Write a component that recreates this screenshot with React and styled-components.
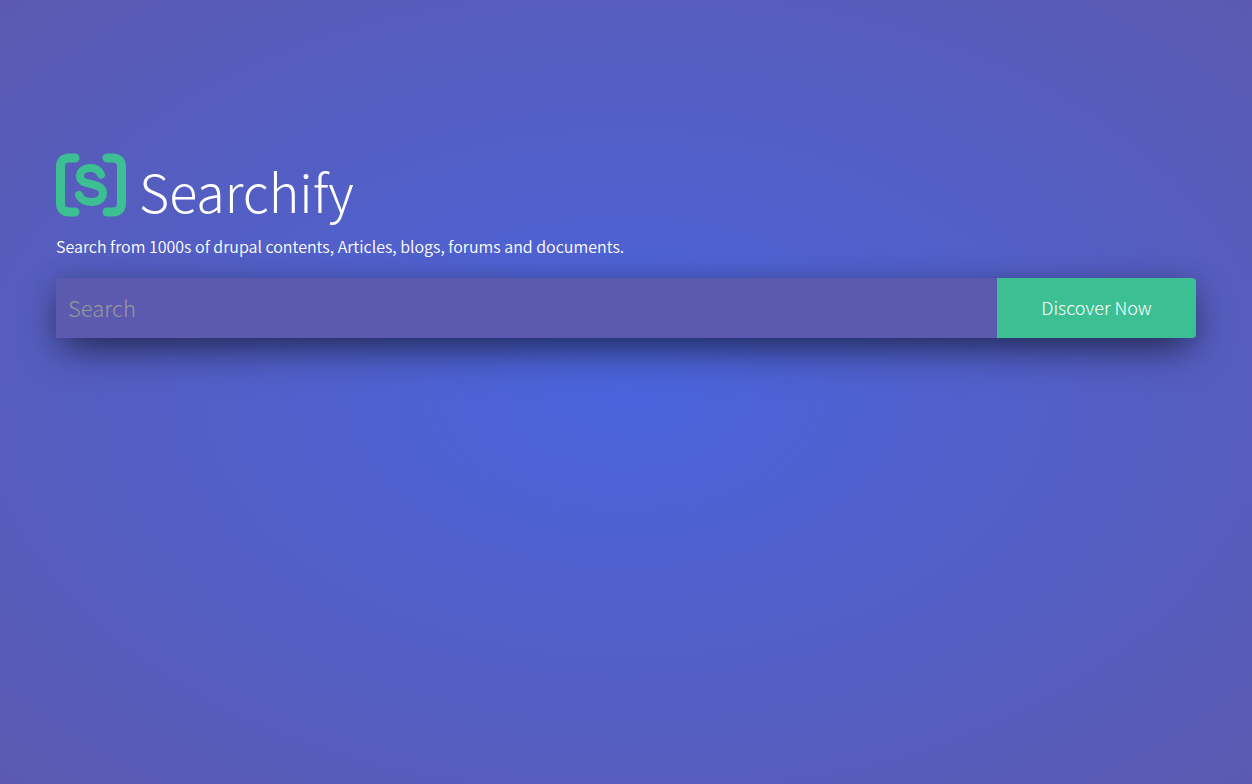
import styled, { createGlobalStyle } from "styled-components";

const App = () => {

    return (
        <>
            <GlobalStyle />
            <Section>
                <Brand>
                    <Logo viewBox="0 0 70 64" aria-hidden="true">
                        <path d="M19 5H13.5Q4.500 5 4.500 14V50Q4.500 59 13.500 59H19" />
                        <path d="M51 5H56.5Q65.500 5 65.500 14V50Q65.500 59 56.500 59H51" />
                        <path className="letter" d="M45 21.500C43 17 39.500 15 34.500 15C28 15 24 18.500 24 23C24 28 28 29.500 35 31C43 32.700 47 35 47 40C47 45.500 42 49 35.500 49C29 49 25 46.500 23 42" />
                    </Logo>
                    <Title>Searchify</Title>
                </Brand>
                <Text>Search from 1000s of drupal contents, Articles, blogs, forums and documents.</Text>
                <Form onSubmit={(e) => e.preventDefault()}>
                    <Input type="text" placeholder="Search" aria-label="Search" />
                    <Button type="submit">Discover Now</Button>
                </Form>
            </Section>
        </>
    )
}

export default App;

const GlobalStyle = createGlobalStyle`
*{
    box-sizing: border-box;
}

body{
    margin: 0;
    font-family: "Noto Sans CJK SC", "Noto Sans", sans-serif;
}
`

const Section = styled.main`
width:100%;
min-height:100vh;
padding:153px 56px 56px;
color:#fff;
background:radial-gradient(ellipse at center, #4a64dc 0%, #5b5ab0 100%);
`

const Brand = styled.div`
display:flex;
align-items:flex-start;
gap:13px;
`

const Logo = styled.svg`
width:70px;
height:64px;
flex:none;
fill:none;
stroke:#3dbf94;
stroke-width:9px;
stroke-linecap:round;
stroke-linejoin:round;

.letter{
    stroke-width:8px;
}
`

const Title = styled.h1`
margin:0;
font-size:52px;
font-weight:300;
line-height:76px;
`

const Text = styled.p`
margin:7px 0 0;
font-size:16px;
font-weight:350;
line-height:20px;
`

const Form = styled.form`
display:flex;
height:60px;
margin-top:22px;
border-radius:4px;
box-shadow:0 16px 40px -8px rgba(0, 0, 0, 0.6), 0 2px 24px rgba(0, 0, 0, 0.15);
`

const Input = styled.input`
flex:1;
min-width:0;
padding:0 12px 2px;
border:0;
border-radius:4px 0 0 0;
outline:none;
color:#fff;
background:#5c5aae;
font-family:inherit;
font-size:22px;
font-weight:300;

&::placeholder{
    color:#999;
    opacity:1;
}
`

const Button = styled.button`
width:199px;
padding:0 0 2px;
border:0;
border-radius:0 4px 4px 0;
color:#fff;
background:#3dbf94;
font-family:inherit;
font-size:18px;
font-weight:300;
cursor:pointer;
`
